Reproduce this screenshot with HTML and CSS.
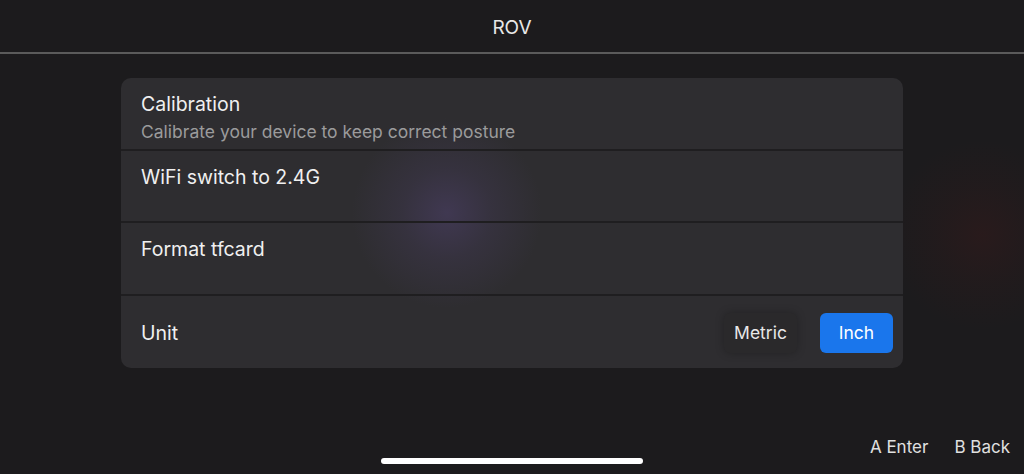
FILE: index.html
```html
<!DOCTYPE html>
<html lang="en">
<head>
  <meta charset="UTF-8">
  <meta name="viewport" content="width=device-width, initial-scale=1.0">
  <title>ROV</title>
  <link rel="stylesheet" href="styles.css">
</head>
<body>

  <!-- Top bar -->
  <header class="topbar">
    <div class="title">ROV</div>
  </header>

  <!-- Settings list -->
  <main class="content">
    <div class="card">
      <div class="row row-top">
        <div class="row-title">Calibration</div>
        <div class="row-sub">Calibrate your device to keep correct posture</div>
      </div>
      <div class="row row-top">
        <div class="row-title">WiFi switch to 2.4G</div>
      </div>
      <div class="row row-top">
        <div class="row-title">Format tfcard</div>
      </div>
      <div class="row row-unit">
        <div class="row-title">Unit</div>
        <div class="unit-buttons">
          <button class="unit-btn">Metric</button>
          <button class="unit-btn active">Inch</button>
        </div>
      </div>
    </div>
  </main>

  <!-- Key hints -->
  <footer class="footer">
    <div class="hints">
      <span>A Enter</span>
      <span>B Back</span>
    </div>
    <div class="home-bar"></div>
  </footer>

</body>
</html>
```

FILE: styles.css
```css
/* General Styles */
* {
  margin: 0;
  padding: 0;
  box-sizing: border-box;
}

html, body {
  height: 100%;
}

body {
  font-family: Inter, "Noto Sans", sans-serif;
  color: #f2f2f2;
  background-color: #1c1b1d;
  /* faint red glow on the right */
  background-image: radial-gradient(circle at 982px 235px, rgba(70, 25, 25, 0.3) 0, rgba(70, 25, 25, 0.12) 50px, rgba(70, 25, 25, 0) 95px);
  overflow: hidden;
  display: flex;
  flex-direction: column;
}

/* Top bar */
.topbar {
  height: 54px;
  border-bottom: 2px solid #5b5b5b;
  display: flex;
  align-items: center;
  justify-content: center;
}

.title {
  font-size: 19px;
  color: #e8e8e8;
  padding-top: 3px;
}

/* Card */
.content {
  padding: 24px 121px 0;
}

.card {
  background-color: #2e2d30;
  /* soft purple glow behind the middle rows */
  background-image: radial-gradient(circle at 326px 135px, rgba(76, 64, 104, 0.6) 0, rgba(76, 64, 104, 0.25) 45px, rgba(76, 64, 104, 0) 95px);
  border-radius: 10px;
  overflow: hidden;
}

.row {
  height: 72.5px;
  padding: 0 20px;
  border-bottom: 2px solid #1f1e20;
}

.row:last-child {
  border-bottom: none;
}

.row-top {
  padding-top: 14px;
}

.row-title {
  font-size: 19.5px;
  color: #f0f0f0;
}

.row-sub {
  font-size: 17.5px;
  color: #9b9b9c;
  margin-top: 5px;
}

.row-unit {
  display: flex;
  align-items: center;
  justify-content: space-between;
  padding-right: 10px;
  padding-top: 2px;
}

.unit-buttons {
  display: flex;
  gap: 23px;
}

.unit-btn {
  width: 73px;
  height: 40px;
  border: none;
  border-radius: 6px;
  font-family: inherit;
  font-size: 17.5px;
  color: #e8e8e8;
  background-color: #2a292b;
  box-shadow: 0 0 8px rgba(0, 0, 0, 0.25);
}

.unit-btn.active {
  background-color: #1a76ec;
  color: #fff;
  box-shadow: none;
}

/* Footer */
.footer {
  margin-top: auto;
  padding-bottom: 10px;
}

.hints {
  display: flex;
  justify-content: flex-end;
  gap: 26px;
  padding-right: 14px;
  font-size: 17px;
  line-height: 20px;
  color: #e0e0e0;
}

.home-bar {
  width: 262px;
  height: 6px;
  border-radius: 3px;
  background-color: #fff;
  margin: 1px auto 0;
}
```
